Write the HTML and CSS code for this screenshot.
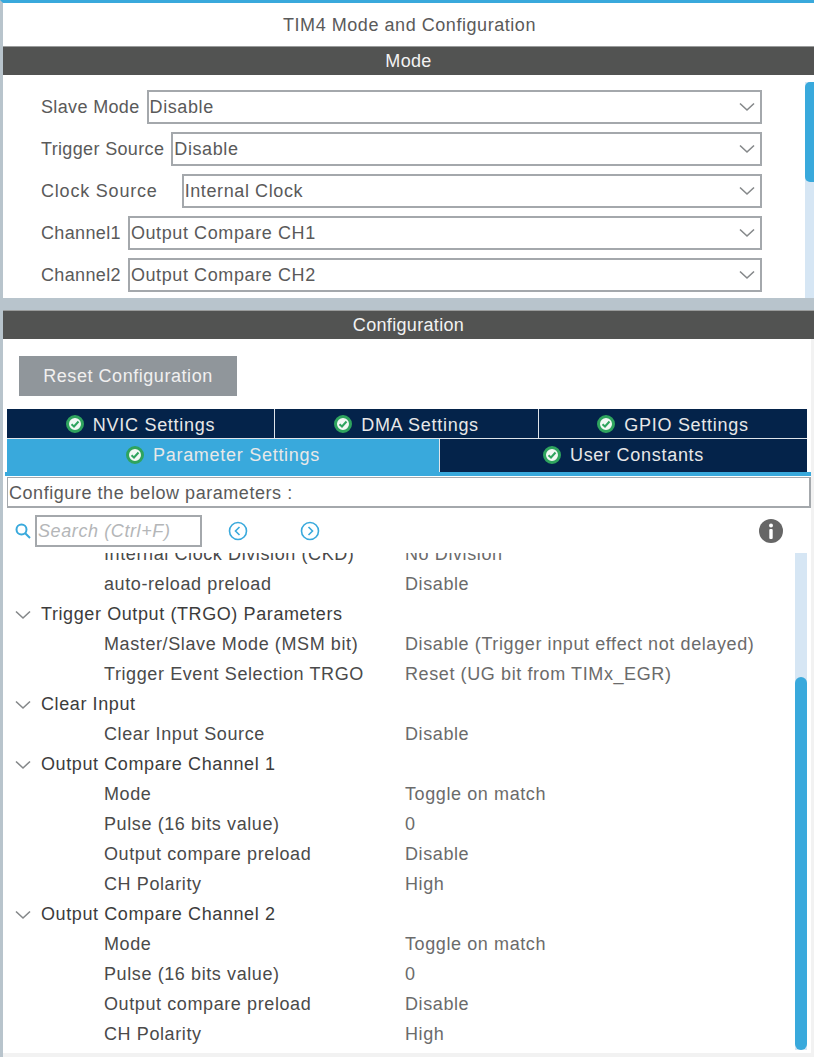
FILE: index.html
```html
<!DOCTYPE html>
<html lang="en">
<head>
  <meta charset="UTF-8" />
  <title>TIM4 Mode and Configuration</title>
  <link rel="stylesheet" href="styles.css">
</head>
<body>
  <div class="window">
    <div class="title">TIM4 Mode and Configuration</div>
    <div class="band">Mode</div>

    <div class="mode-panel">
      <div class="mode-form">
        <div class="field"><label>Slave Mode</label><div class="select">Disable<svg class="caret" viewBox="0 0 16 10"><path d="M1 1.5 8 8l7-6.500"/></svg></div></div>
        <div class="field"><label>Trigger Source</label><div class="select">Disable<svg class="caret" viewBox="0 0 16 10"><path d="M1 1.5 8 8l7-6.500"/></svg></div></div>
        <div class="field"><label class="wide">Clock Source</label><div class="select">Internal Clock<svg class="caret" viewBox="0 0 16 10"><path d="M1 1.5 8 8l7-6.500"/></svg></div></div>
        <div class="field"><label>Channel1</label><div class="select">Output Compare CH1<svg class="caret" viewBox="0 0 16 10"><path d="M1 1.5 8 8l7-6.500"/></svg></div></div>
        <div class="field"><label>Channel2</label><div class="select">Output Compare CH2<svg class="caret" viewBox="0 0 16 10"><path d="M1 1.5 8 8l7-6.500"/></svg></div></div>
      </div>
      <div class="mode-scroll"><div class="mode-thumb"></div></div>
    </div>

    <div class="divider"></div>
    <div class="band">Configuration</div>

    <div class="config-panel">
      <button class="reset">Reset Configuration</button>

      <div class="tabs">
        <div class="tab-row">
          <div class="tab"><svg class="ok" viewBox="0 0 18 18"><circle cx="9" cy="9" r="7.500"/><path d="M5.500 9.200 8 11.500l4.500-5"/></svg>NVIC Settings</div>
          <div class="tab"><svg class="ok" viewBox="0 0 18 18"><circle cx="9" cy="9" r="7.500"/><path d="M5.500 9.200 8 11.500l4.500-5"/></svg>DMA Settings</div>
          <div class="tab"><svg class="ok" viewBox="0 0 18 18"><circle cx="9" cy="9" r="7.500"/><path d="M5.500 9.200 8 11.500l4.500-5"/></svg>GPIO Settings</div>
        </div>
        <div class="tab-row tab-row-low">
          <div class="tab active"><svg class="ok" viewBox="0 0 18 18"><circle cx="9" cy="9" r="7.500"/><path d="M5.500 9.200 8 11.500l4.500-5"/></svg>Parameter Settings</div>
          <div class="tab"><svg class="ok" viewBox="0 0 18 18"><circle cx="9" cy="9" r="7.500"/><path d="M5.500 9.200 8 11.500l4.500-5"/></svg>User Constants</div>
        </div>
      </div>

      <div class="hint">Configure the below parameters :</div>

      <div class="search-bar">
        <svg class="glass" viewBox="0 0 16 16"><circle cx="6.500" cy="6.500" r="5"/><path d="M10.200 10.200 15 15"/></svg>
        <div class="search">Search (Ctrl+F)</div>
        <svg class="nav nav-prev" viewBox="0 0 20 20"><circle cx="10" cy="10" r="8.500"/><path d="M11.500 6 7.500 10l4 4"/></svg>
        <svg class="nav nav-next" viewBox="0 0 20 20"><circle cx="10" cy="10" r="8.500"/><path d="M8.500 6l4 4-4 4"/></svg>
        <svg class="info" viewBox="0 0 24 24"><circle cx="12" cy="12" r="12"/><circle class="info-mark" cx="12" cy="6.500" r="2"/><rect class="info-mark" x="10.300" y="10" width="3.400" height="10" rx="1"/></svg>
      </div>

      <div class="list-wrap">
        <div class="list">
          <div class="row"><span class="name">Internal Clock Division (CKD)</span><span class="value">No Division</span></div>
          <div class="row"><span class="name">auto-reload preload</span><span class="value">Disable</span></div>
          <div class="group"><svg class="fold" viewBox="0 0 16 10"><path d="M1 1.500 8 8l7-6.500"/></svg>Trigger Output (TRGO) Parameters</div>
          <div class="row"><span class="name">Master/Slave Mode (MSM bit)</span><span class="value">Disable (Trigger input effect not delayed)</span></div>
          <div class="row"><span class="name">Trigger Event Selection TRGO</span><span class="value">Reset (UG bit from TIMx_EGR)</span></div>
          <div class="group"><svg class="fold" viewBox="0 0 16 10"><path d="M1 1.500 8 8l7-6.500"/></svg>Clear Input</div>
          <div class="row"><span class="name">Clear Input Source</span><span class="value">Disable</span></div>
          <div class="group"><svg class="fold" viewBox="0 0 16 10"><path d="M1 1.500 8 8l7-6.500"/></svg>Output Compare Channel 1</div>
          <div class="row"><span class="name">Mode</span><span class="value">Toggle on match</span></div>
          <div class="row"><span class="name">Pulse (16 bits value)</span><span class="value">0</span></div>
          <div class="row"><span class="name">Output compare preload</span><span class="value">Disable</span></div>
          <div class="row"><span class="name">CH Polarity</span><span class="value">High</span></div>
          <div class="group"><svg class="fold" viewBox="0 0 16 10"><path d="M1 1.500 8 8l7-6.500"/></svg>Output Compare Channel 2</div>
          <div class="row"><span class="name">Mode</span><span class="value">Toggle on match</span></div>
          <div class="row"><span class="name">Pulse (16 bits value)</span><span class="value">0</span></div>
          <div class="row"><span class="name">Output compare preload</span><span class="value">Disable</span></div>
          <div class="row"><span class="name">CH Polarity</span><span class="value">High</span></div>
        </div>
        <div class="list-scroll"><div class="list-thumb"></div></div>
      </div>
    </div>
  </div>
</body>
</html>
```

FILE: styles.css
```css
html, body {
  margin: 0;
  padding: 0;
  height: 100%;
  overflow: hidden;
  background-color: #f2f2f2;
  font-family: 'Liberation Sans', Roboto, sans-serif;
  font-size: 18px;
  letter-spacing: 0.6px;
  color: #5a5a5a;
}

.window {
  height: 1057px;
  box-sizing: border-box;
  border-top: 3px solid #39a9dc;
  border-left: 3px solid #b8c4cc;
  display: flex;
  flex-direction: column;
}

.title {
  height: 43px;
  line-height: 45px;
  background: #fff;
  text-align: center;
  padding-left: 2px;
  letter-spacing: 0.55px;
}

.band {
  height: 29px;
  line-height: 28px;
  background: #525352;
  color: #f2f2f2;
  text-align: center;
  flex: none;
  box-sizing: border-box;
  border-top: 1px solid #9a9c9c;
  letter-spacing: 0.33px;
}

/* mode panel */
.mode-panel {
  height: 223px;
  background: #fff;
  display: flex;
  flex: none;
}

.mode-form {
  flex: 1;
  padding: 15px 43px 0 38px;
  display: flex;
  flex-direction: column;
  gap: 8px;
}

.field {
  display: flex;
  align-items: center;
  gap: 7px;
}

.field label {
  flex: none;
  letter-spacing: 0.35px;
}

.field label.wide {
  margin-right: 17px;
  letter-spacing: 0.8px;
}

.select {
  flex: 1;
  height: 34px;
  line-height: 30px;
  box-sizing: border-box;
  border: 2px solid #a4a8ac;
  padding-left: 1px;
  display: flex;
  justify-content: space-between;
  align-items: center;
}

.caret {
  width: 16px;
  height: 10px;
  margin-right: 5px;
}

.caret path, .fold path {
  fill: none;
  stroke: #85888a;
  stroke-width: 1.6;
}

.mode-scroll {
  width: 9px;
  margin-top: 7px;
  background: #d6e6f4;
  flex: none;
}

.mode-thumb {
  height: 100px;
  background: #39a9dc;
  border-radius: 5px 0 0 5px;
}

.divider {
  height: 12px;
  background: #b8c4cc;
  flex: none;
}

/* configuration panel */
.config-panel {
  height: 714px;
  flex: none;
  background: #fff;
  border-right: 3px solid #f2f2f2;
  box-sizing: border-box;
}

.reset {
  display: block;
  margin: 17px 0 0 16px;
  width: 218px;
  height: 40px;
  border: none;
  background: #90969b;
  color: #f0f0f0;
  font-family: inherit;
  font-size: 18px;
  letter-spacing: 0.55px;
  padding: 0;
}

.tabs {
  margin: 13px 0 0 2px;
  padding: 0 4px 0 2px;
  border-bottom: 4px solid #39a9dc;
}

.tab-row {
  display: grid;
  grid-template-columns: 267px 264px 269px;
  height: 30px;
}

.tab-row-low {
  grid-template-columns: 432px 368px;
  height: 33px;
}

.tab {
  background: #04234a;
  color: #e8e8e8;
  border-left: 1px solid #dfe4ea;
  border-bottom: 1px solid #dfe4ea;
  box-sizing: border-box;
  display: flex;
  align-items: center;
  justify-content: center;
  gap: 9px;
  letter-spacing: 0.72px;
  padding-top: 3px;
}

.tab:first-child {
  border-left: none;
}

.tab-row-low .tab {
  border-bottom: none;
  padding: 0;
}

.tab.active {
  background: #39a9dc;
}

.ok {
  width: 18px;
  height: 18px;
  flex: none;
  margin-bottom: 2px;
}

.ok circle {
  fill: #f2f8f4;
  stroke: #2fa45e;
  stroke-width: 3;
}

.ok path {
  fill: none;
  stroke: #2fa45e;
  stroke-width: 2;
}

.hint {
  margin: 1px 0 0 4px;
  height: 31px;
  line-height: 30px;
  box-sizing: border-box;
  border: 2px solid #a4a8ac;
  border-width: 1px 2px 2px 1px;
  padding-left: 1px;
  letter-spacing: 0.55px;
}

.search-bar {
  height: 45px;
  display: flex;
  align-items: center;
  padding-left: 12px;
}

.glass {
  width: 16px;
  height: 16px;
  flex: none;
  margin-right: 4px;
}

.glass circle, .glass path, .nav circle, .nav path {
  fill: none;
  stroke: #39a9dc;
  stroke-width: 2;
}

.search {
  width: 167px;
  height: 32px;
  line-height: 29px;
  box-sizing: border-box;
  border: 2px solid #a4a8ac;
  padding-left: 1px;
  font-style: italic;
  letter-spacing: 0.6px;
  color: #b4b6b8;
  flex: none;
}

.nav {
  width: 20px;
  height: 20px;
  flex: none;
}

.nav circle, .nav path {
  stroke-width: 1.6;
}

.nav-prev {
  margin-left: 26px;
}

.nav-next {
  margin-left: 52px;
}

.info {
  width: 24px;
  height: 24px;
  flex: none;
  margin-left: auto;
  margin-right: 28px;
}

.info circle {
  fill: #666;
}

.info .info-mark {
  fill: #fff;
}

/* parameter list, scrolled so the first row is cut off */
.list-wrap {
  height: 500px;
  overflow: hidden;
  display: flex;
}

.list {
  flex: 1;
  margin-top: -14px;
}

.row, .group {
  height: 30px;
  line-height: 30px;
  white-space: nowrap;
}

.row {
  display: flex;
  padding-left: 101px;
  color: #4a4a4a;
}

.name {
  width: 301px;
  flex: none;
}

.value {
  color: #6b6b6b;
}

.group {
  color: #3c3c3c;
  padding-left: 12px;
}

.fold {
  width: 16px;
  height: 10px;
  margin-right: 10px;
}

.list-scroll {
  width: 12px;
  height: 497px;
  margin-right: 4px;
  background: #d6e6f4;
  flex: none;
}

.list-thumb {
  height: 373px;
  margin-top: 124px;
  background: #39a9dc;
  border-radius: 6px;
}
```
